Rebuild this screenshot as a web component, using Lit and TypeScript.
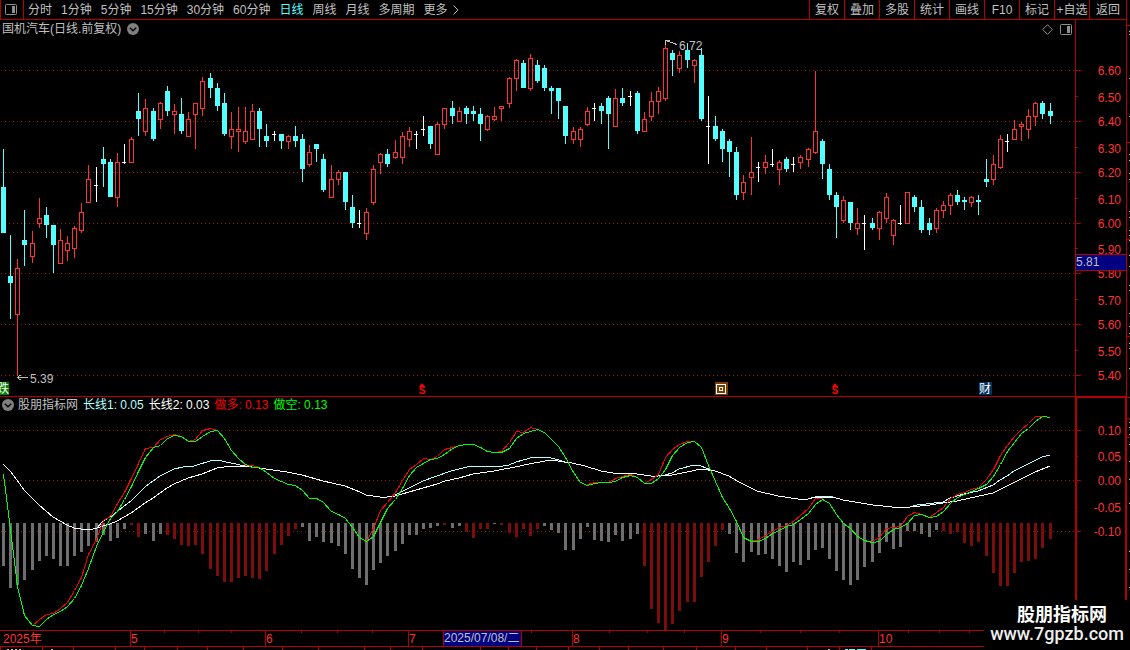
import { LitElement, html, svg, css } from "lit";
import { customElement, property, state } from "lit/decorators.js";
import { classMap } from "lit/directives/class-map.js";

type Kind = "u" | "d" | "w";

// One entry per trading day: direction, high, body top, body bottom, low.
const CANDLES = `
d149,187,233,233 d235,276,283,319 u259,268,315,376 d210,240,245,266 u231,243,257,263 u198,218,224,228
d207,215,225,238 d225,225,245,273 u229,240,264,264 u236,243,251,261 u226,228,249,258 u203,212,231,233
u165,179,203,203 w167,185,186,202 d147,159,164,187 d159,162,197,197 u153,162,198,207 w144,162,163,164
u137,139,163,163 d93,111,119,136 u99,108,132,136 d108,111,139,141 u102,103,120,129 d86,91,111,116
u104,111,115,134 d98,114,131,134 u112,119,137,137 u103,103,115,149 u77,81,109,116 d73,78,88,98
d83,88,106,111 d93,103,134,136 u112,129,137,149 u107,129,132,152 u107,131,142,144 u104,111,140,140
d108,111,129,147 d124,136,141,147 w131,134,135,141 d134,134,141,149 u135,136,142,149 d126,136,141,147
d134,139,169,182 u145,152,165,167 d144,144,149,162 d154,159,190,192 u165,179,198,198 u170,172,180,185
d172,172,202,210 d195,207,223,228 w210,223,224,228 u208,212,234,240 u165,169,203,205 u153,154,163,174
d149,154,164,167 u140,152,158,159 u132,136,158,164 u127,131,140,147 w131,134,135,149 w116,129,130,136
d126,126,144,149 u122,124,155,155 u108,108,125,129 d101,108,116,124 u107,111,122,122 d106,108,114,124
d106,111,114,121 d108,114,124,141 u115,116,130,131 u107,116,120,121 u106,106,109,121 u77,78,104,108
u59,60,79,91 d60,63,88,88 u54,58,89,91 d60,65,81,83 d65,68,88,91 d86,88,91,114
d88,88,101,119 d106,106,136,144 u127,131,140,144 u127,129,140,147 u107,111,125,126 w103,108,109,121
d103,106,111,124 d96,98,114,149 u89,98,127,127 d88,98,103,106 w91,96,97,106 d91,93,131,134
u112,119,132,132 u92,101,117,121 u87,91,102,114 u43,48,99,101 d50,53,60,76 u51,55,69,73
d43,50,60,68 u59,60,66,83 d48,55,119,121 w96,126,127,164 d116,126,139,141 d129,131,149,162
d139,141,152,177 d147,152,195,200 u175,182,193,200 u137,172,178,195 w162,167,168,182 u155,162,168,174
w149,164,165,167 u160,162,170,185 d157,159,169,172 w157,164,165,172 u155,157,163,169 u148,149,160,167
u71,131,153,154 d139,141,164,179 d164,169,195,200 d192,195,207,238 u196,200,221,223 d202,202,223,230
u208,223,229,235 w215,223,224,250 d218,223,228,230 u211,212,229,240 u193,197,219,223 u219,220,236,245
w205,223,224,225 u192,192,224,224 d195,197,207,212 d200,207,230,233 d218,223,230,235 u208,210,229,233
u201,205,211,218 u193,195,206,215 d190,195,202,205 d197,200,202,210 u196,197,203,207 d195,200,202,215
d159,179,182,187 u155,164,180,185 u135,139,168,169 w134,141,142,152 u120,129,140,140 u122,124,127,141
u109,116,130,139 u102,103,117,126 d101,103,114,119 d103,111,116,124`
  .trim()
  .split(/\s+/)
  .map((s) => ({ kind: s[0] as Kind, v: s.slice(1).split(",").map(Number) }));

// Histogram lengths; a minus sign marks the red side.
const BARS = [
  43, 65, 62, 57, 47, 38, 33, 36, 43, 43, 33, 29, 23, 19, 12, 18, 15, 6, -2, -14, 11, 18, 11, -12, -16, -22, -23, -22,
  -31, -46, -53, -59, -59, -55, -53, -55, -56, -48, -31, -22, -13, -6, 4, 18, 14, 19, 20, 23, 31, 46, 55, 62, 47, 40,
  33, 28, 21, 12, 12, 6, 5, 3, -2, 5, 3, -9, -15, -6, -6, 1, -2, -10, -14, -6, -13, -6, 3, 7, 10, 27, 27, 16, 4, 17,
  18, 19, 12, 18, 16, 11, -43, -86, -100, -107, -101, -88, -79, -79, -54, -39, -23, -7, 11, 30, 39, 29, 32, 31, 36, 43,
  49, 39, 42, 37, 27, 25, 36, 48, 57, 62, 57, 44, 39, 30, 19, 26, 24, 8, 8, 11, 14, 7, -8, -11, -9, -20, -23, -19,
  -33, -50, -63, -63, -50, -39, -38, -36, -25, -16,
];

const SHORT = [
  474, 529, 586, 615, 625, 626, 619, 614, 611, 606, 598, 585, 568, 546, 531, 518, 511, 499, 486, 471, 457, 447, 445,
  438, 435, 436, 441, 441, 436, 431, 430, 438, 450, 458, 464, 467, 467, 472, 478, 481, 484, 485, 490, 498, 498, 502,
  511, 514, 518, 527, 537, 541, 536, 522, 508, 499, 488, 475, 467, 463, 459, 458, 454, 448, 445, 444, 444, 447, 451,
  452, 452, 448, 438, 433, 431, 429, 432, 439, 446, 457, 472, 482, 485, 483, 482, 482, 481, 477, 475, 477, 483, 483,
  478, 469, 455, 447, 442, 441, 447, 465, 481, 497, 508, 521, 537, 541, 541, 538, 533, 530, 526, 524, 519, 513, 504,
  499, 503, 514, 523, 528, 536, 540, 542, 541, 534, 529, 527, 523, 515, 514, 517, 516, 511, 503, 497, 494, 491, 488,
  484, 476, 464, 451, 442, 433, 428, 421, 416, 417,
];

// Stretches where the long signal departs from the short one, keyed by first day.
const LONG_RUNS: [number, number[]][] = [
  [4, [625, 619, 614, 613, 608, 602, 590, 577, 554, 539, 520, 516, 503, 492, 478, 463, 448, 447, 439, 436, 434, 436,
    441, 439, 430, 428, 430]],
  [33, [458, 465, 465, 467]],
  [51, [541, 528, 510, 502, 492, 480, 469, 464, 458, 459, 456, 449, 447, 445, 444]],
  [69, [452, 451, 442, 431, 432, 427, 429]],
  [82, [484, 482, 482, 482, 478, 476, 474, 477, 483, 479, 474, 457, 449, 444, 441, 441]],
  [105, [541, 539, 535, 531, 527, 525, 521, 515, 508, 498, 498]],
  [122, [541, 537, 528, 527, 526, 516, 512, 514, 517, 512, 507, 498, 494, 492, 489, 487, 479, 469, 455, 445, 436, 429,
    423, 416, 416]],
];

const SLOW =
  "3,464 10,471 17,480 24,490 32,498 39,505 53,517 60,521 67,525 74,528 81,529 89,530 97,528 103,526 110,524 117,521 131,513 145,503 153,498 167,488 174,484 188,478 202,474 217,468 231,466 245,466 252,467 266,469 287,472 302,475 323,481 345,486 360,492 366,495 380,497 387,497 395,496 409,492 423,488 437,484 445,481 459,478 473,474 494,471 515,467 529,464 551,460 558,461 572,463 585,466 601,471 613,473 637,474 651,476 658,476 672,475 687,472 701,469 715,471 729,476 737,481 757,491 778,496 798,499 808,499 815,497 833,497 843,500 873,505 892,507 910,507 930,505 943,503 957,501 993,493 1013,483 1035,472 1050,466";
const FAST = [
  "97,528 103,521 110,517 117,512 124,506 131,501 145,487 153,481 160,476 174,469 183,467 194,466 210,461 217,460 231,463 245,466 252,467",
  "395,495 409,488 423,481 437,476 451,471 471,466 503,466 509,465 516,462 534,457 547,457 559,460 567,463",
  "665,475 672,473 679,469 694,465 701,466 711,470",
  "808,499 819,496 830,496 835,498",
  "910,507 917,505 943,502 950,498 957,496 964,494 978,491 993,485 1000,480 1007,476 1014,471 1028,464 1042,457 1050,455",
];

const PRICE_TICKS: [string, number][] = [
  ["6.60", 70], ["6.50", 96], ["6.40", 121], ["6.30", 147], ["6.20", 172], ["6.10", 198], ["6.00", 223],
  ["5.90", 248], ["5.80", 273], ["5.70", 299], ["5.60", 324], ["5.50", 350], ["5.40", 375],
];
const IND_TICKS: [string, number][] = [["0.10", 430], ["0.05", 456], ["0.00", 480], ["-0.05", 507], ["-0.10", 531]];

const MONTHS: [string, number][] = [["5", 130], ["6", 265], ["7", 408], ["8", 572], ["9", 721], ["10", 878]];
const WEEKS = [164, 198, 231, 301, 337, 372, 531, 609, 647, 684, 760, 800, 839, 908, 939, 969];
const TAB_EDGES = [
  0, 42, 73, 115, 144, 177, 207, 243, 282, 318, 364, 390, 422, 480, 508, 536, 568, 599, 628, 663, 696, 735, 766, 807,
  839, 871,
];
const SIDE_RULES = [25, 142, 239, 336, 397, 418, 437];
const SIDE_DOTS = [
  31, 34, 78, 116, 154, 160, 173, 179, 211, 217, 230, 235, 240, 255, 266, 285, 290, 313, 326, 333, 343, 348, 368, 422,
  427, 434, 444, 461, 479, 503, 551, 569, 587,
];

const dayX = (i: number) => Math.floor(3.539 + i * 7.1195);
const trace = (ys: number[], from = 0) => ys.map((y, k) => `${dayX(from + k) + 0.5},${y + 0.5}`).join(" ");

const chevron = html`<svg class="icon" width="12" height="12" viewBox="0 0 12 12" aria-hidden="true">
  <circle cx="6" cy="6" r="6" fill="#808080" />
  <path d="M2.8 4.8 L6 7.8 L9.2 4.8" fill="none" stroke="#000" stroke-width="1.5" />
</svg>`;
const panelIcon = html`<svg class="icon" width="12" height="11" viewBox="0 0 12 11" aria-hidden="true">
  <rect x="0.5" y="0.5" width="11" height="10" rx="1" fill="none" stroke="#909090" />
  <rect x="7" y="2" width="3" height="7" fill="#909090" />
</svg>`;

@customElement("chart-toolbar")
class ChartToolbar extends LitElement {
  @state() private period = "日线";

  static styles = css`
    :host { display: block; }
    .bar { display: flex; height: 19px; border-bottom: 1px solid #b40000; }
    button { all: unset; box-sizing: border-box; cursor: pointer; line-height: 18px; text-align: center; white-space: nowrap; }
    .toggle { display: flex; align-items: center; width: 24px; padding-left: 4px; border: solid #b40000; border-width: 0 1px; }
    .periods { display: flex; flex: 1; gap: 9px; padding-left: 4px; }
    .periods .on { color: #54ffff; }
    .more { display: flex; align-items: center; gap: 5px; }
    .tools { display: flex; }
    .tools button { width: 35px; border-left: 1px solid #b40000; }
    .tools button:last-child { width: 37px; }
    .icon { display: block; }
  `;

  render() {
    const periods = ["分时", "1分钟", "5分钟", "15分钟", "30分钟", "60分钟", "日线", "周线", "月线", "多周期"];
    const tools = ["复权", "叠加", "多股", "统计", "画线", "F10", "标记", "+自选", "返回"];
    return html`<div class="bar">
      <button class="toggle" aria-label="侧栏">${panelIcon}</button>
      <nav class="periods">
        ${periods.map(
          (p) => html`<button class=${classMap({ on: p === this.period })} @click=${() => (this.period = p)}>${p}</button>`,
        )}
        <button class="more">更多<svg width="6" height="10" viewBox="0 0 6 10" aria-hidden="true">
          <path d="M0.5 0.5 L5 5 L0.5 9.5" fill="none" stroke="#c0c0c0" /></svg></button>
      </nav>
      <div class="tools">${tools.map((t) => html`<button>${t}</button>`)}</div>
    </div>`;
  }
}

const chartStyles = css`
  :host { display: grid; grid-template-columns: minmax(0, 1fr) 51px; }
  svg { display: block; }
  .plot, .scale { width: 100%; }
  .area { display: flex; flex-direction: column; min-width: 0; }
  button { all: unset; display: flex; cursor: pointer; }
  text { font-size: 12px; }
  .crisp { shape-rendering: crispEdges; }
  .grid { stroke: #a01414; stroke-dasharray: 1 3; }
  .axis { border-left: 1px solid #b40000; }
  .rule { fill: #b40000; }
  .num { fill: #ff3232; text-anchor: end; }
  .note { fill: #c0c0c0; }
`;

@customElement("price-panel")
class PricePanel extends LitElement {
  static styles = [
    chartStyles,
    css`
      :host { border-bottom: 1px solid #b40000; }
      .head { display: flex; align-items: center; height: 18px; gap: 6px; padding: 0 3px 0 2px; }
      .head .push { margin-left: auto; margin-right: 1px; }
      .u { fill: none; stroke: #ff3232; }
      .uw { fill: #ff3232; }
      .d { fill: #54ffff; }
      .w { fill: #ffffff; }
      .arrow { fill: none; stroke: #c0c0c0; }
      .mark { fill: #ffffff; }
      .fall { fill: #008000; }
      .report { fill: #7c3e00; }
      .fin { fill: #003264; }
      .ring { fill: none; stroke: #ffffff; }
      .div { fill: #ff0000; font-size: 10px; font-weight: bold; text-anchor: middle; }
      .divtri { fill: #ff0000; }
      .cursor { fill: #000080; stroke: #b40000; }
    `,
  ];

  private candle(kind: Kind, [high, top, bottom, low]: number[], x: number) {
    if (kind === "u")
      return svg`<rect class="uw" x=${x} y=${high} width="1" height=${top - high}/>
        <rect class="uw" x=${x} y=${bottom} width="1" height=${low - bottom}/>
        <rect class="u" x=${x - 1.5} y=${top + 0.5} width="4" height=${bottom - top - 1}/>`;
    return svg`<rect class=${kind} x=${x} y=${high} width="1" height=${low - high}/>
      <rect class=${kind} x=${x - 2} y=${top} width=${kind === "d" ? 5 : 4} height=${bottom - top}/>`;
  }

  private dividend(x: number) {
    return svg`<path class="divtri" d="M${x} 383 l3 4 h-6 z"/>
      <text class="div" x=${x} y="394">S</text>`;
  }

  render() {
    return html`<div class="area">
        <div class="head">
          <span>国机汽车(日线.前复权)</span>
          <button aria-label="展开">${chevron}</button>
          <button class="push" aria-label="标记点"><svg width="11" height="11" viewBox="0 0 11 11" aria-hidden="true">
            <path d="M5.5 0.7 L10.3 5.5 L5.5 10.3 L0.7 5.5 Z" fill="none" stroke="#909090" /></svg></button>
          <button aria-label="面板">${panelIcon}</button>
        </div>
        <svg class="plot" height="358" role="img" aria-label="日线">
          <g transform="translate(0 -38)">
            <g class="crisp">
              ${PRICE_TICKS.filter((_, i) => i % 2 === 0).map(
                ([, y]) => svg`<line class="grid" x1="1" x2="100%" y1=${y + 0.5} y2=${y + 0.5}/>`,
              )}
              ${CANDLES.map((c, i) => this.candle(c.kind, c.v, dayX(i)))}
              <path class="arrow" d="M17 377.5 H28 M20.5 375 L17.5 377.5 L20.5 380" />
              <path class="arrow" d="M670 40.5 H665.5 V45 M665.5 40.5 L677 44.5" />
            </g>
            <text class="note" x="30" y="383">5.39</text>
            <text class="note" x="679" y="50">6.72</text>
            <rect class="fall" x="0" y="382" width="9" height="13" />
            <text class="mark" x="-3" y="393">跌</text>
            ${this.dividend(422)} ${this.dividend(835)}
            <rect class="report" x="715" y="382" width="13" height="13" />
            <rect class="ring" x="716.5" y="384.5" width="9" height="9" />
            <rect class="ring" x="719.5" y="387.5" width="3" height="3" />
            <rect class="fin" x="979" y="382" width="13" height="13" />
            <text class="mark" x="979" y="393">财</text>
          </g>
        </svg>
      </div>
      <div class="axis">
        <svg class="scale" height="376" role="img" aria-label="价格">
          <g transform="translate(0 -20)">
            ${PRICE_TICKS.map(
              ([label, y], i) => svg`<rect class="rule" x="0" y=${y} width=${i % 2 ? 2 : 5} height="1"/>
                <text class="num" x="45" y=${y + (i % 2 ? 6 : 5)}>${label}</text>`,
            )}
            <rect class="cursor" x="-0.5" y="254.5" width="60" height="16" />
            <text class="note" x="0" y="266">5.81</text>
          </g>
        </svg>
      </div>`;
  }
}

@customElement("indicator-panel")
class IndicatorPanel extends LitElement {
  static styles = [
    chartStyles,
    css`
      .head { display: flex; align-items: center; height: 16px; gap: 5px; padding-left: 2px; white-space: nowrap; }
      .name { display: flex; align-items: center; gap: 4px; }
      .l1 { color: #b4ffff; }
      .l2 { color: #ffffff; }
      .l3 { color: #ff0000; }
      .l4 { color: #00ff00; }
      .axis { box-sizing: border-box; border: solid #b40000; border-width: 1px 1px 0 2px; }
      .pos { fill: #6e6e6e; }
      .neg { fill: #7d0c0c; }
      polyline { fill: none; stroke: currentColor; }
    `,
  ];

  render() {
    return html`<div class="area">
        <div class="head">
          <button class="name">${chevron}<span>股朋指标网</span></button>
          <span class="l1">长线1: 0.05</span>
          <span class="l2">长线2: 0.03</span>
          <span class="l3">做多: 0.13</span>
          <span class="l4">做空: 0.13</span>
        </div>
        <svg class="plot" height="217" role="img" aria-label="股朋指标网">
          <g class="crisp" transform="translate(0 -413)">
            ${[430, 480, 531].map((y) => svg`<line class="grid" x1="1" x2="100%" y1=${y + 0.5} y2=${y + 0.5}/>`)}
            ${BARS.map(
              (v, i) => svg`<rect class=${v < 0 ? "neg" : "pos"} x=${dayX(i) - 1} y="523" width="3" height=${Math.abs(v)}/>`,
            )}
            ${FAST.map((p) => svg`<polyline class="l1" points=${p}/>`)}
            <polyline class="l2" points=${SLOW} />
            ${LONG_RUNS.map(([from, ys]) => svg`<polyline class="l3" points=${trace(ys, from)}/>`)}
            <polyline class="l4" points=${trace(SHORT)} />
          </g>
        </svg>
      </div>
      <div class="axis">
        <svg class="scale" height="232" role="img" aria-label="指标值">
          <g transform="translate(0 -398)">
            ${IND_TICKS.map(
              ([label, y], i) => svg`<rect class="rule" x="0" y=${y} width=${i % 2 ? 1 : 4} height="1"/>
                <text class="num" x="44" y=${y + 5}>${label}</text>`,
            )}
          </g>
        </svg>
      </div>`;
  }
}

@customElement("time-axis")
class TimeAxis extends LitElement {
  @property() day = "2025/07/08/二";

  static styles = css`
    :host { display: block; }
    svg { display: block; width: 100%; }
    text { font-size: 12px; fill: #ff3232; }
    .rule { fill: #b40000; }
    .cursor { fill: #000080; stroke: #b40000; }
    .day { fill: #c0c0c0; }
    .gray { fill: #c0c0c0; }
    .cyan { fill: #54ffff; }
  `;

  render() {
    return html`<svg height="20" role="img" aria-label="日期">
      <rect class="rule" x="0" y="0" width="100%" height="1" />
      <rect class="rule" x="0" y="16" width="100%" height="1" />
      <text x="3" y="13">2025年</text>
      ${MONTHS.map(
        ([m, x]) => svg`<rect class="rule" x=${x} y="0" width="1" height="16"/><text x=${x + 1} y="13">${m}</text>`,
      )}
      ${WEEKS.map((x) => svg`<rect class="rule" x=${x} y="1" width="1" height="2"/>`)}
      ${TAB_EDGES.map((x) => svg`<rect class="rule" x=${x} y="17" width="1" height="3"/>`)}
      <rect class="cursor" x="443.5" y="0.5" width="78" height="16" />
      <text class="day" x="444" y="12">${this.day}</text>
      ${[7, 11, 15, 19, 51, 828].map((x) => svg`<rect class="gray" x=${x} y="19" width="2" height="1"/>`)}
      <rect class="cyan" x="845" y="19" width="3" height="1" />
      <rect class="cyan" x="849" y="19" width="6" height="1" />
      <rect class="cyan" x="857" y="19" width="9" height="1" />
    </svg>`;
  }
}

@customElement("app-root")
class AppRoot extends LitElement {
  static styles = css`
    :host {
      display: grid;
      grid-template-columns: minmax(0, 1fr) 3px;
      position: relative;
      min-height: 100vh;
      overflow: hidden;
      background: #000;
      color: #c0c0c0;
      font: 12px/16px "Liberation Sans", "Noto Sans CJK SC", sans-serif;
    }
    .main { display: flex; flex-direction: column; border-right: 1px solid #b40000; }
    .side { display: block; width: 3px; height: 100%; }
    .rule { fill: #b40000; }
    .dot { fill: #c0c0c0; }
    .brand {
      position: absolute;
      right: 0;
      bottom: 0;
      box-sizing: border-box;
      width: 146px;
      height: 50px;
      padding: 1px 6px 0 0;
      background: #000;
      color: #fff;
      text-align: right;
      white-space: nowrap;
    }
    .brand strong { display: block; padding-right: 17px; font: bold 18px/25px "Noto Sans CJK SC", sans-serif; }
    .brand span { display: block; font: 500 18px/16px Roboto, sans-serif; color: #eee; }
  `;

  render() {
    return html`<main class="main">
        <chart-toolbar></chart-toolbar>
        <price-panel></price-panel>
        <indicator-panel></indicator-panel>
        <time-axis></time-axis>
      </main>
      <svg class="side" aria-hidden="true">
        ${SIDE_RULES.map((y) => svg`<rect class="rule" x="0" y=${y} width="3" height="1"/>`)}
        ${SIDE_DOTS.map((y) => svg`<rect class="dot" x="2" y=${y} width="1" height="1"/>`)}
      </svg>
      <div class="brand"><strong>股朋指标网</strong><span>www.7gpzb.com</span></div>`;
  }
}
